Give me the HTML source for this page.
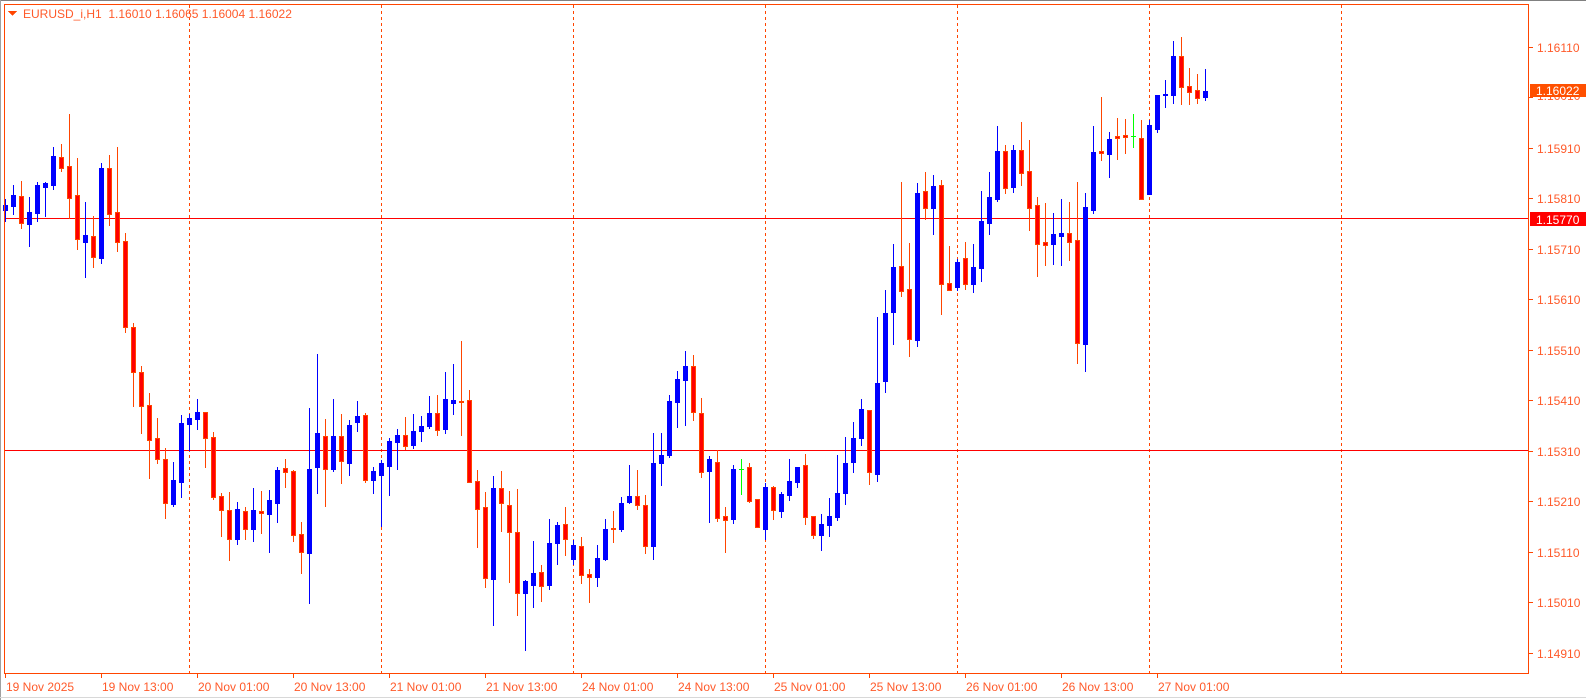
<!DOCTYPE html>
<html><head><meta charset="utf-8">
<style>
html,body{margin:0;padding:0;background:#fff;width:1586px;height:700px;overflow:hidden}
svg{display:block}
text{font-family:"Liberation Sans",Arial,sans-serif;font-size:12px;white-space:pre}
</style></head><body>
<svg id="s" width="1586" height="700" xmlns="http://www.w3.org/2000/svg" shape-rendering="crispEdges">
<rect x="0" y="0" width="1586" height="700" fill="#fff"/>
<rect x="0" y="0" width="1586" height="1" fill="#808080"/>
<rect x="0" y="0" width="1" height="700" fill="#a0a0a0"/>
<rect x="0" y="697" width="1586" height="1" fill="#d8d8d8"/>
<g id="grid"></g>
<rect x="4" y="218" width="1525" height="1" fill="#ff0000"/>
<rect x="4" y="450" width="1525" height="1" fill="#ff0000"/>
<g id="candles"></g>
<rect x="4.5" y="4.5" width="1524" height="669" fill="none" stroke="#ff4500" stroke-width="1"/>
<g id="axis"></g>
<polygon points="8,11 17,11 12.5,16" fill="#ff4500"/>
<text x="23" y="18" fill="#ff5a2a" xml:space="preserve">EURUSD_i,H1  1.16010 1.16065 1.16004 1.16022</text>
<text x="1537" y="100" fill="#ff5a2a">1.16010</text>
<rect x="1530" y="84" width="56" height="13" fill="#ff5000"/>
<text x="1536" y="95" fill="#fff">1.16022</text>
<rect x="1530" y="212" width="56" height="14" fill="#ff0000"/>
<text x="1536" y="224" fill="#fff">1.15770</text>
</svg>
<script>
(function(){
var NS="http://www.w3.org/2000/svg";
function el(p,t,a,txt){var e=document.createElementNS(NS,t);for(var k in a)e.setAttribute(k,a[k]);if(txt)e.textContent=txt;p.appendChild(e);return e;}
var grid=document.getElementById('grid');
for(var x=189;x<1529;x+=192){el(grid,'line',{x1:x+0.5,y1:5,x2:x+0.5,y2:673,stroke:'#ff4500','stroke-dasharray':'3,3'});}
var ax=document.getElementById('axis');
var labels=["19 Nov 2025","19 Nov 13:00","20 Nov 01:00","20 Nov 13:00","21 Nov 01:00","21 Nov 13:00","24 Nov 01:00","24 Nov 13:00","25 Nov 01:00","25 Nov 13:00","26 Nov 01:00","26 Nov 13:00","27 Nov 01:00"];
for(var i=0;i<labels.length;i++){var tx=5+96*i;el(ax,'rect',{x:tx,y:674,width:1,height:4,fill:'#ff4500'});el(ax,'text',{x:tx+1,y:691,fill:'#ff5a2a'},labels[i]);}
for(var j=0;j<13;j++){var p=1.16110-0.001*j;var y=218.3+(1.15770-p)*50500;var yy=Math.round(y);
 el(ax,'rect',{x:1529,y:yy,width:4,height:1,fill:'#ff4500'});
 if(j==1)continue;
 el(ax,'text',{x:1537,y:yy+5,fill:'#ff5a2a'},p.toFixed(5));}
var D=[
['B',205,210,199,221],['B',195,206,185,214],['R',196,223,181,228],['B',212,224,197,246],['B',185,213,182,221],
['B',183,187,182,216],['B',156,185,147,189],['R',157,168,144,171],['R',166,198,114,218],['R',195,239,158,249],
['B',235,242,202,277],['R',236,257,216,267],['B',168,258,163,263],['R',168,214,155,225],['R',212,242,147,251],
['R',241,327,233,332],['R',327,372,323,406],['R',372,406,366,433],['R',405,440,393,478],['R',438,459,418,463],
['R',459,503,448,518],['B',480,504,462,506],['B',423,482,415,497],['B',418,424,414,450],['B',412,419,399,429],
['R',412,438,412,467],['R',437,497,432,499],['R',496,510,493,536],['R',510,539,492,560],['B',509,539,502,544],
['R',511,529,507,539],['B',510,529,488,541],['R',511,513,491,533],['B',500,514,490,552],['B',470,503,467,522],
['R',468,472,459,487],['R',471,535,470,541],['R',534,552,522,573],['B',469,553,408,603],['B',433,467,354,493],
['R',436,469,419,506],['B',436,469,399,471],['R',436,461,414,483],['B',425,463,420,475],['B',416,422,401,431],
['R',415,480,413,482],['B',471,480,467,493],['B',463,475,460,526],['B',441,466,438,495],['B',435,442,429,469],
['R',435,446,417,449],['B',431,445,414,448],['B',426,431,416,441],['B',413,426,396,428],['R',413,430,395,435],
['B',399,429,372,433],['B',400,403,364,414],['R',401,402,341,435],['R',400,482,390,482],['R',481,509,470,547],
['R',507,578,492,587],['B',488,579,476,625],['R',488,503,471,531],['R',505,532,491,582],['R',532,593,489,615],
['B',581,593,580,650],['B',573,585,541,607],['R',572,586,565,601],['B',543,585,519,589],['B',525,543,522,564],
['R',524,539,507,555],['B',545,559,540,564],['R',546,575,537,583],['R',574,577,569,602],['B',558,577,545,586],
['B',529,559,519,560],['R',528,529,511,542],['B',503,529,497,531],['B',496,502,465,503],['R',496,505,470,509],
['R',505,546,495,553],['B',463,546,433,559],['B',455,463,433,485],['B',401,455,395,457],['B',379,402,371,427],
['B',366,380,351,425],['R',366,412,355,420],['R',413,472,398,477],['B',459,471,456,522],['R',462,518,450,521],
['R',516,520,507,552],['B',469,519,465,523],['G',469,469,459,494],['R',467,501,463,502],['R',499,527,499,527],
['B',487,529,483,539],['R',487,510,486,519],['B',494,511,492,517],['B',481,495,459,500],['B',467,482,467,487],
['R',465,517,454,524],['R',516,535,516,538],['B',524,535,514,550],['B',516,525,498,536],['B',493,517,455,520],
['B',463,493,437,504],['B',438,462,422,472],['B',409,438,399,445],['R',410,472,410,484],['B',383,474,317,481],
['B',313,381,290,392],['B',267,312,244,344],['R',266,291,182,296],['R',289,339,243,356],['B',193,340,183,346],
['R',191,208,172,219],['B',186,208,175,234],['R',185,284,180,314],['R',283,290,246,290],['B',262,287,259,290],
['R',258,284,242,289],['B',267,284,244,292],['B',221,268,191,281],['B',197,223,172,234],['B',151,199,126,201],
['R',151,188,145,193],['B',150,187,145,192],['R',150,173,122,185],['R',171,208,140,230],['R',205,244,197,276],
['R',242,245,203,265],['B',234,244,213,264],['B',233,236,199,265],['R',233,242,202,260],['R',240,343,182,363],
['B',207,344,193,371],['B',152,210,126,213],['R',151,153,97,160],['B',139,154,132,177],['R',136,138,118,159],
['R',135,137,119,153],['G',136,136,114,147],['R',138,199,120,199],['B',125,194,120,194],['B',95,129,95,132],
['B',94,95,80,107],['B',56,95,41,103],['R',56,87,37,104],['R',86,92,68,104],['R',90,98,74,103],
['B',91,97,69,100]
];
var cg=document.getElementById('candles');
for(var i=0;i<D.length;i++){var d=D[i],c=5+8*i,t=d[0],bt=d[1],bb=d[2],hi=d[3],lo=d[4];
 var wc=t=='B'?'#0000ff':(t=='G'?'#00ff00':'#ff4500');
 el(cg,'rect',{x:c,y:hi,width:1,height:Math.max(1,lo-hi+1),fill:wc});
 if(t=='G'){el(cg,'rect',{x:c-2,y:bt,width:5,height:1,fill:'#00ff00'});continue;}
 var h=Math.max(1,bb-bt+1);
 if(t=='B'){el(cg,'rect',{x:c-2,y:bt,width:5,height:h,fill:'#0000ff'});}
 else{el(cg,'rect',{x:c-2,y:bt,width:5,height:Math.max(2,h),fill:'#ff4500'});
  if(h>2)el(cg,'rect',{x:c-1,y:bt+1,width:3,height:h-2,fill:'#ff0000'});}
}
})();
</script>
</body></html>
